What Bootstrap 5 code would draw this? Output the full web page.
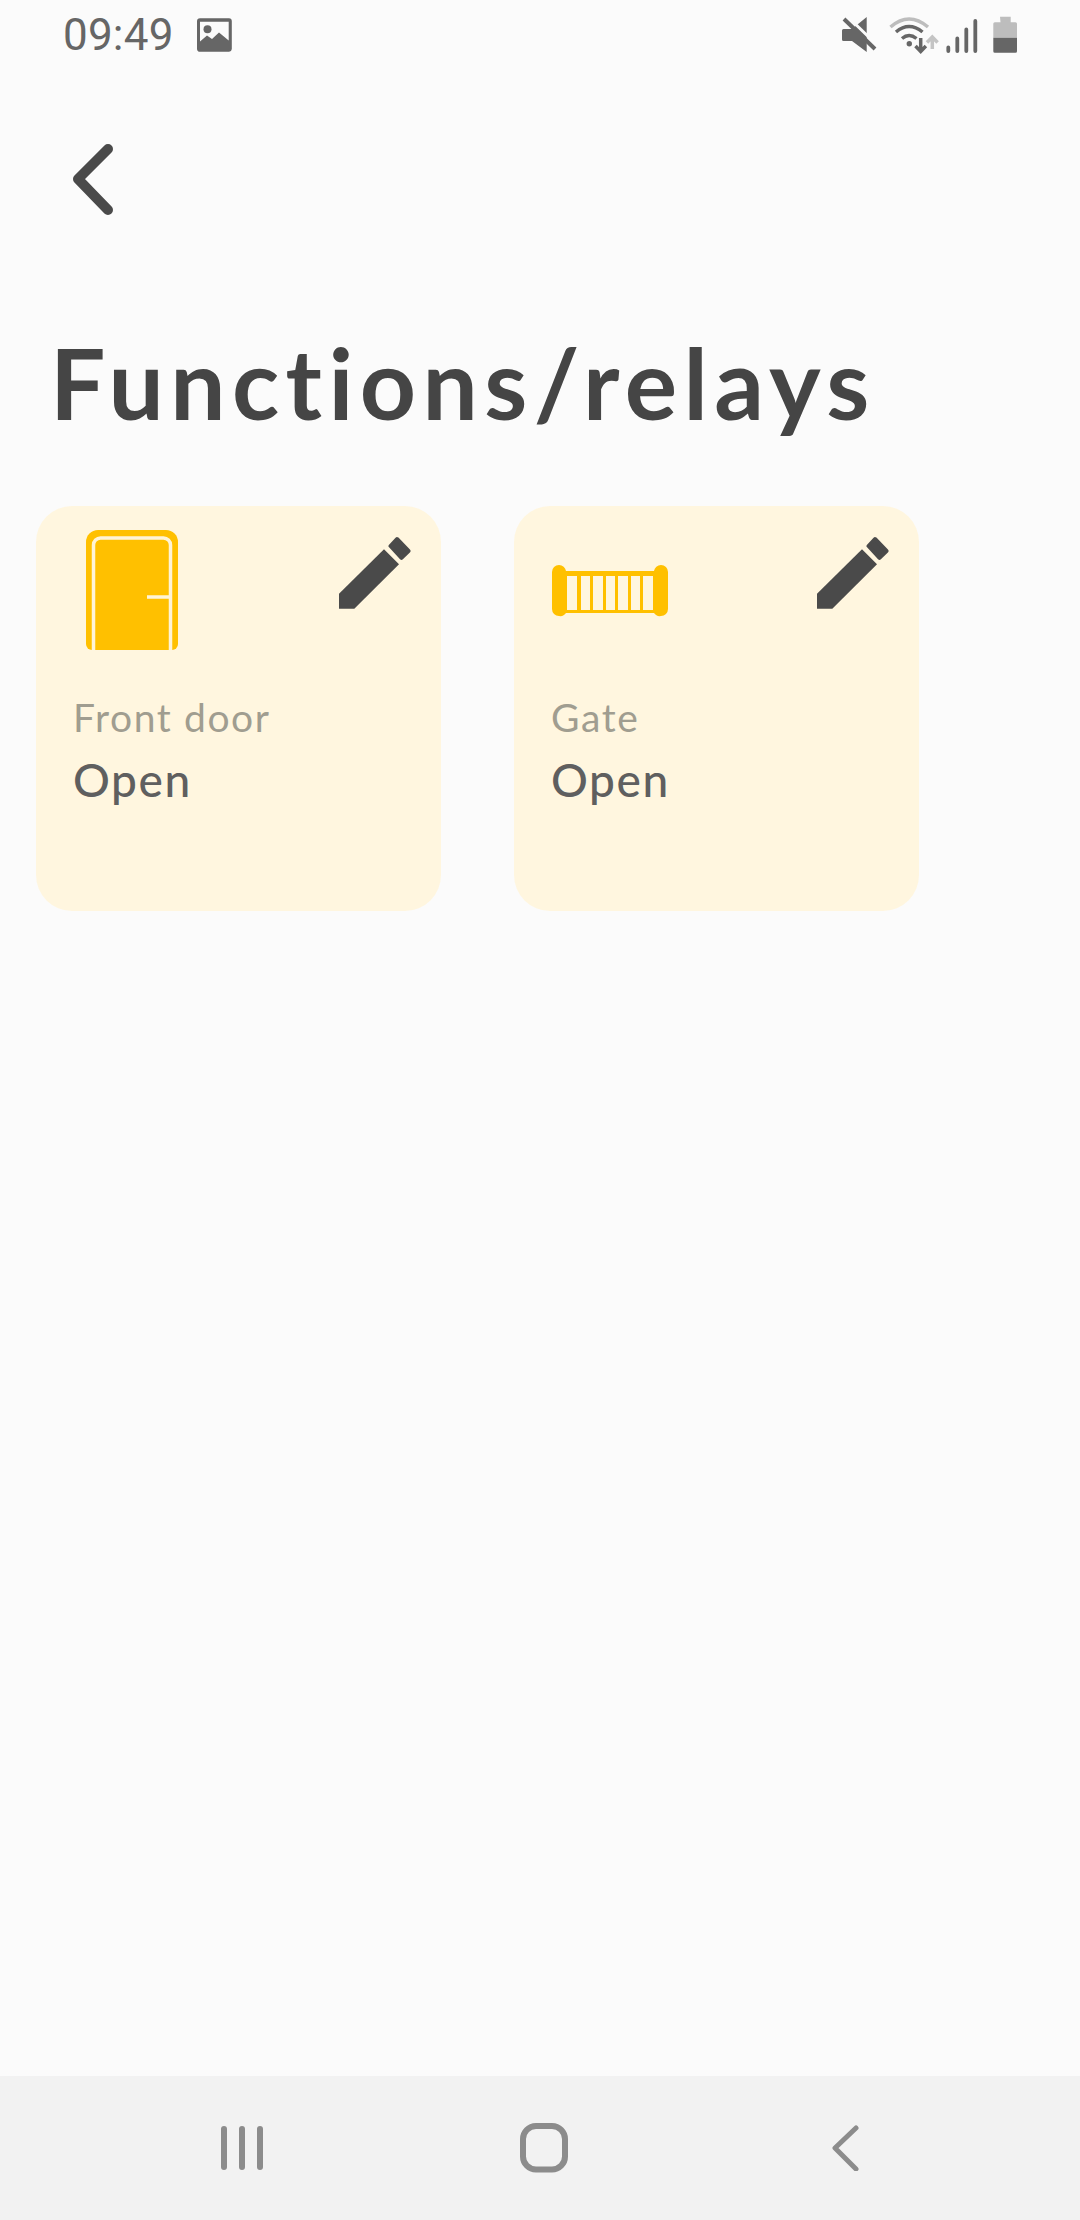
<!DOCTYPE html>
<html lang="en">
<head>
<meta charset="utf-8">
<title>Functions/relays</title>
<link href="https://cdn.jsdelivr.net/npm/bootstrap@5.3.0/dist/css/bootstrap.min.css" rel="stylesheet">
<style>
html,body{height:100%}
body{background:#fbfbfb;font-family:Lato,"Liberation Sans",sans-serif;overflow:hidden}
.screen{height:2220px}
.status-row{height:70px;padding:0 63px 0 63px}
.clock{font-family:Roboto,sans-serif;font-weight:400;font-size:44px;line-height:1;color:#666;width:134px;letter-spacing:.2px}
.back-link{padding:74px 0 0 71px;height:145px;line-height:0}
.page-title{font-family:Lato,sans-serif;font-weight:700;font-size:98px;line-height:1;color:#454545;letter-spacing:6.45px;margin:0;padding:118px 0 0 50px;height:291px}
.tiles{padding-left:36px;gap:73px}
.tile{width:405px;height:405px;background:#fff6df;border-radius:36px;padding:24px 30px 0 37px}
.tile-icon{width:116px;height:120px;margin-left:1px}
.tile-label{font-size:39px;line-height:1;color:#a09d90;letter-spacing:1.6px;margin-top:48px}
.tile-state{font-size:46px;line-height:1;color:#5f5f5f;letter-spacing:1.6px;font-weight:500;margin-top:20px}
.edit-icon{margin-top:6px}
.softkeys{height:144px;background:#f2f2f2;margin-top:auto;padding-left:8px}
.softkey{width:302px}
</style>
</head>
<body>
<div class="screen d-flex flex-column">
  <div class="status-row d-flex align-items-center justify-content-between">
    <div class="d-flex align-items-center">
      <span class="clock">09:49</span>
      <svg width="36" height="40" viewBox="197 15 36 40"><path fill="#666" fill-rule="evenodd" d="M200 18.3h29a3 3 0 0 1 2.8 3v27.6a3 3 0 0 1-2.8 2.8h-29a3 3 0 0 1-3-2.8V21.300a3 3 0 0 1 3-3zM200 21.700v19.800l7-6 5 3.500 7-6.500 9.700 8V21.700z"/><circle cx="207.500" cy="29.300" r="4" fill="#666"/></svg>
    </div>
    <div class="d-flex align-items-center">
      <svg width="47" height="40" viewBox="842 15 47 40"><path fill="#666" d="M843.500 29h8.500l14.700-12v35l-14.700-11h-8.500a1.500 1.500 0 0 1-1.500-1.500v-9a1.500 1.500 0 0 1 1.500-1.500z"/><path stroke="#fbfbfb" stroke-width="3" d="M847 16l31 30"/><path stroke="#666" stroke-width="4" d="M844 19l31 30"/></svg>
      <svg width="57" height="40" viewBox="889 15 57 40" fill="none"><path stroke="#bdbdbd" stroke-width="3.500" d="M890.500 27q18.500-16 37.500 0"/><path stroke="#666" stroke-width="3.500" d="M896 32q13-11 26.500 0M902 38.500q7-6 14.500 0"/><circle cx="909.300" cy="43.700" r="2.700" fill="#666"/><path stroke="#666" stroke-width="3.500" d="M920.700 38v13M915.500 46l5.200 5.500 5.200-5.500"/><path stroke="#c4c4c4" stroke-width="3.500" d="M932.300 49V37.500M927 42.500l5.300-5.500 5.300 5.500"/></svg>
      <svg width="47" height="40" viewBox="946 15 47 40" fill="none" stroke="#666" stroke-width="3.800" stroke-linecap="round"><path d="M948.300 47.500v3.500M957.300 38.500v12.500M966.300 29.500v21.500M975.300 21v30"/></svg>
      <svg width="24" height="40" viewBox="993 15 24 40"><path fill="#bdbdbd" d="M1000 16.700h10.700v5.600h4.800a1.500 1.500 0 0 1 1.500 1.500v14h-23.700v-14a1.500 1.500 0 0 1 1.500-1.500h5.700z"/><path fill="#666" d="M993.300 37.700H1017v13.500a1.500 1.500 0 0 1-1.500 1.500h-20.700a1.500 1.500 0 0 1-1.500-1.500z"/></svg>
    </div>
  </div>

  <div class="back-link">
    <svg width="44" height="71" viewBox="71 144 44 71" fill="none"><path stroke="#4a4a4a" stroke-width="10" stroke-linecap="round" stroke-linejoin="round" d="M108 149L78 179l30 31"/></svg>
  </div>

  <h1 class="page-title">Functions/relays</h1>

  <div class="tiles d-flex">
    <div class="tile">
      <div class="d-flex justify-content-between align-items-start">
        <svg class="tile-icon" viewBox="74 530 116 120" fill="none"><path fill="#ffc000" d="M98 530h68a12 12 0 0 1 12 12v102a6 6 0 0 1-6 6H92a6 6 0 0 1-6-6V542a12 12 0 0 1 12-12z"/><path stroke="#fff4d6" stroke-width="3.500" d="M93.500 650V545a7 7 0 0 1 7-7h63a7 7 0 0 1 7 7v105M147 597h23.500"/></svg>
        <svg class="edit-icon" width="72" height="73" viewBox="339 535 72 73"><path fill="#4a4a4a" d="M339 592.700L384 548.300l15 15L354.300 607.700H339z"/><path fill="#4a4a4a" stroke="#4a4a4a" stroke-width="4" stroke-linejoin="round" d="M390.500 545l6.500-7 11.500 12-7 6.800z"/></svg>
      </div>
      <div class="tile-label">Front door</div>
      <div class="tile-state">Open</div>
    </div>
    <div class="tile">
      <div class="d-flex justify-content-between align-items-start">
        <svg class="tile-icon" viewBox="551 530 116 120"><path fill="#ffc000" fill-rule="evenodd" d="M558 565a7 7 0 0 1 7 6h88a7 7 0 0 1 7-6 7 7 0 0 1 7 7v37a7 7 0 0 1-7 7 7 7 0 0 1-7-3h-88a7 7 0 0 1-7 3 7 7 0 0 1-7-7v-37a7 7 0 0 1 7-7zM566 576v34h10v-34zM580 576v34h9v-34zM592 576v34h10v-34zM605 576v34h9v-34zM617 576v34h10v-34zM630 576v34h9v-34zM642 576v34h10v-34z"/></svg>
        <svg class="edit-icon" width="72" height="73" viewBox="339 535 72 73"><path fill="#4a4a4a" d="M339 592.700L384 548.300l15 15L354.300 607.700H339z"/><path fill="#4a4a4a" stroke="#4a4a4a" stroke-width="4" stroke-linejoin="round" d="M390.500 545l6.500-7 11.500 12-7 6.800z"/></svg>
      </div>
      <div class="tile-label">Gate</div>
      <div class="tile-state">Open</div>
    </div>
  </div>

  <div class="softkeys d-flex justify-content-center align-items-center">
    <div class="softkey d-flex justify-content-center">
      <svg width="44" height="46" viewBox="220 2125 44 46" fill="none" stroke="#8c8c8c" stroke-width="6" stroke-linecap="round"><path d="M224 2129v38M242 2129v38M260 2129v38"/></svg>
    </div>
    <div class="softkey d-flex justify-content-center">
      <svg width="48" height="50" viewBox="520 2123 48 50" fill="none"><rect x="523" y="2126" width="42" height="43.500" rx="13" stroke="#8c8c8c" stroke-width="6"/></svg>
    </div>
    <div class="softkey d-flex justify-content-center">
      <svg width="28" height="46" viewBox="832 2125 28 46" fill="none"><path stroke="#8c8c8c" stroke-width="5" stroke-linecap="round" stroke-linejoin="round" d="M856 2128l-21 20 21 21"/></svg>
    </div>
  </div>
</div>
<script src="https://cdn.jsdelivr.net/npm/bootstrap@5.3.0/dist/js/bootstrap.bundle.min.js"></script>
</body>
</html>
